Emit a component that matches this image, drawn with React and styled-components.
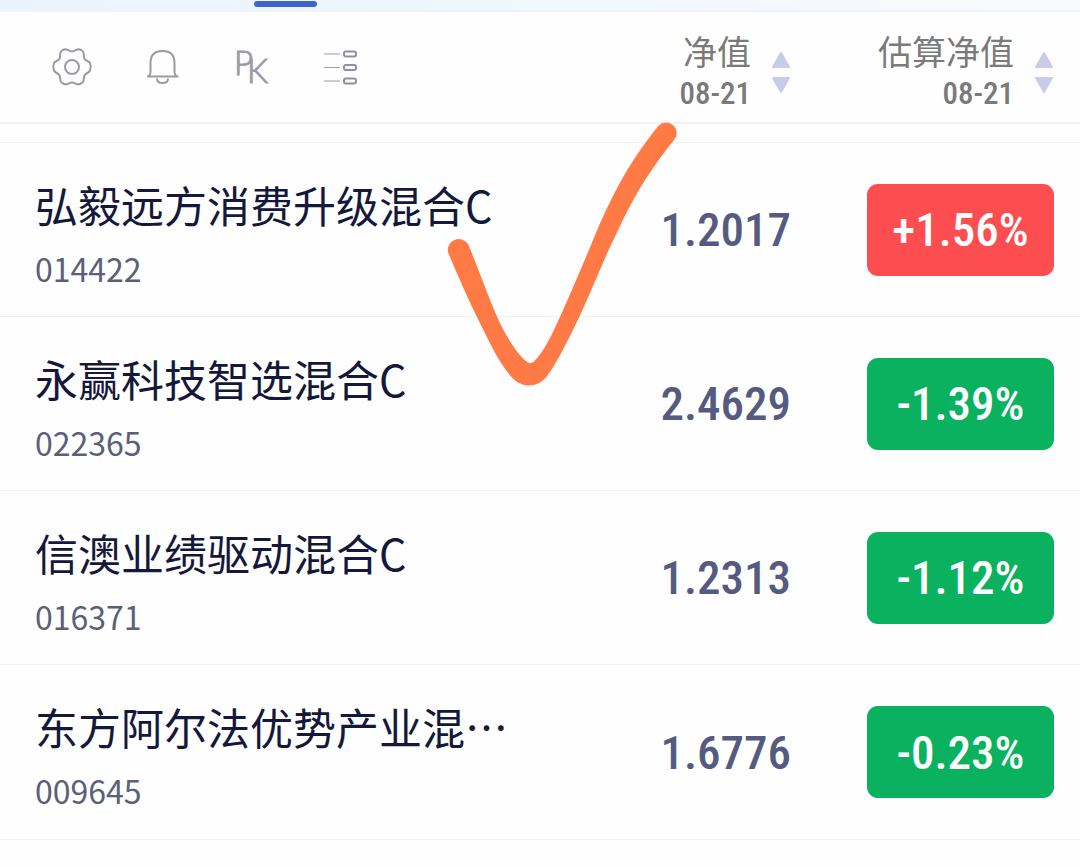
import React from 'react'
import styled, { createGlobalStyle } from 'styled-components'

const GlobalStyle = createGlobalStyle`
  * {
    box-sizing: border-box;
  }

  body {
    margin: 0;
    background: #fefefe;
    font-family: 'Noto Sans CJK SC', 'Noto Sans', sans-serif;
    color: #14183a;
  }
`

const numeric = `'Roboto Condensed', 'Liberation Sans Narrow', Roboto, sans-serif`

const Page = styled.main`
  position: relative;
  min-height: 100vh;
  overflow: hidden;
`

const TabStrip = styled.div`
  height: 12px;
  padding: 1px 0 0 254px;
  background: linear-gradient(90deg, #eaf3fb, #f6fbff);
  border-bottom: 2px solid #f0f4f8;
`

const TabIndicator = styled.div`
  width: 63px;
  height: 6px;
  border-radius: 3px;
  background: #4263c7;
`

const Table = styled.table`
  width: 100%;
  border-collapse: separate;
  border-spacing: 0;
  table-layout: fixed;

  tbody::before {
    content: '';
    display: table-row;
    height: 18px;
  }
`

const HeadCell = styled.th`
  width: ${({ width }) => width || 'auto'};
  height: 112px;
  padding: 0 ${({ end }) => end || '0'} 0 0;
  border-bottom: 2px solid #f2f2f4;
  font-weight: 400;
  text-align: right;
`

const Toolbar = styled.div`
  display: flex;
  align-items: center;
  gap: 50px;
  padding-left: 52px;
`

const IconButton = styled.button`
  display: flex;
  width: 40px;
  height: 40px;
  padding: 0;
  border: none;
  background: transparent;
  cursor: pointer;

  svg {
    width: 40px;
    height: 40px;
    overflow: visible;
    fill: none;
    stroke: #9a9ba8;
    stroke-width: 2;
  }

  text {
    fill: #9a9ba8;
    stroke-width: 1;
    font-family: Lato, sans-serif;
    font-weight: 300;
    font-size: 33px;
  }
`

const SortButton = styled.button`
  display: inline-flex;
  align-items: center;
  gap: 20px;
  padding: 10px 0 0;
  border: none;
  background: transparent;
  color: #7a7a7a;
  cursor: pointer;

  svg {
    width: 20px;
    height: 44px;
    fill: #c8cbea;
    stroke: #c8cbea;
    stroke-width: 2;
    stroke-linejoin: round;
  }
`

const SortLabel = styled.span`
  display: flex;
  flex-direction: column;
  align-items: flex-end;
  font-family: 'Noto Sans CJK SC', sans-serif;
  font-size: 34px;
  line-height: 44px;
  white-space: nowrap;
`

const SortDate = styled.span`
  font-family: ${numeric};
  font-weight: 500;
  font-size: 31px;
  line-height: 42px;
`

const Cell = styled.td`
  height: 174px;
  padding: 0 ${({ end }) => end || '0'} 0 0;
  border-top: 1px solid #f2f2f4;
  text-align: right;

  tr:last-child & {
    height: 176px;
    border-bottom: 1px solid #f2f2f4;
  }
`

const NameCell = styled(Cell)`
  padding-top: 12px;
  padding-left: 35px;
  text-align: left;
`

const FundName = styled.div`
  font-size: 43px;
  line-height: 64px;
  white-space: nowrap;
`

const FundCode = styled.div`
  color: #5b6079;
  font-size: 32px;
  line-height: 64px;
`

const Value = styled.span`
  color: #555b80;
  font-family: ${numeric};
  font-weight: 500;
  font-size: 47px;
`

const Change = styled.span`
  display: inline-flex;
  align-items: center;
  justify-content: center;
  width: 187px;
  height: 92px;
  border-radius: 11px;
  background: ${({ $up }) => ($up ? '#fc4e50' : '#0ab25f')};
  color: #ffffff;
  font-family: ${numeric};
  font-weight: 500;
  font-size: 47px;
  vertical-align: middle;
`

const CheckMark = styled.svg`
  position: absolute;
  top: 110px;
  left: 430px;
  width: 270px;
  height: 290px;
  fill: #ff7a45;
  pointer-events: none;
`

const funds = [
  { name: '弘毅远方消费升级混合C', code: '014422', value: '1.2017', change: '+1.56%' },
  { name: '永赢科技智选混合C', code: '022365', value: '2.4629', change: '-1.39%' },
  { name: '信澳业绩驱动混合C', code: '016371', value: '1.2313', change: '-1.12%' },
  { name: '东方阿尔法优势产业混…', code: '009645', value: '1.6776', change: '-0.23%' },
]

const GearIcon = () => (
  <svg viewBox="0 0 40 40">
    <path d="M12 2.500C15 1 16.500 4.500 20 4.500S25 1 28 2.500L30 3.500C33 5.500 31 8.500 32.500 11.500S36.500 13.500 38 16Q39.500 20 38 23.500C36.500 26.500 34 25.500 32.500 28.500S33 34 30 36L28 37C25 38.500 23.500 35.500 20 35.500S15 38.500 12 37L10 36C7 34 9 31.500 7.500 28.500S3.500 26.500 2 23.500Q0.500 20 2 16C3.500 13.500 6 14.500 7.500 11.500S7 5.500 10 3.500Z" />
    <circle cx="20" cy="20" r="7" />
  </svg>
)

const BellIcon = () => (
  <svg viewBox="0 0 40 40">
    <path d="M5 29.500H36.500M6.500 29Q8.500 28 8.500 25V16Q8.500 4 20.500 4T32.500 16V25Q32.500 28 34.500 29M15 31.500Q15 36 20.500 36T26 31.500" />
  </svg>
)

const PkIcon = () => (
  <svg viewBox="0 0 40 40">
    <text x="2" y="28">
      P
      <tspan x="15" y="36">K</tspan>
    </text>
  </svg>
)

const ListIcon = () => (
  <svg viewBox="0 0 40 40">
    {[7, 20.5, 34].map(y => (
      <g key={y}>
        <path d={`M2 ${y}H18`} strokeWidth="1" />
        <rect x="22" y={y - 2.5} width="12" height="5" rx="2" stroke="#8e8fa6" />
      </g>
    ))}
  </svg>
)

const SortHeader = ({ label, date }) => (
  <SortButton type="button">
    <SortLabel>
      {label}
      <SortDate>{date}</SortDate>
    </SortLabel>
    <svg viewBox="0 0 20 44">
      <path d="M10 3L18 17H2ZM10 42L18 28H2Z" />
    </svg>
  </SortButton>
)

const App = () => (
  <Page>
    <GlobalStyle />
    <TabStrip>
      <TabIndicator />
    </TabStrip>
    <Table lang="zh-CN">
      <thead>
        <tr>
          <HeadCell scope="col">
            <Toolbar>
              <IconButton type="button" aria-label="设置">
                <GearIcon />
              </IconButton>
              <IconButton type="button" aria-label="提醒">
                <BellIcon />
              </IconButton>
              <IconButton type="button" aria-label="PK">
                <PkIcon />
              </IconButton>
              <IconButton type="button" aria-label="列表">
                <ListIcon />
              </IconButton>
            </Toolbar>
          </HeadCell>
          <HeadCell scope="col" width="200px">
            <SortHeader label="净值" date="08-21" />
          </HeadCell>
          <HeadCell scope="col" width="289px" end="26px">
            <SortHeader label="估算净值" date="08-21" />
          </HeadCell>
        </tr>
      </thead>
      <tbody>
        {funds.map(({ name, code, value, change }) => (
          <tr key={code}>
            <NameCell>
              <FundName>{name}</FundName>
              <FundCode>{code}</FundCode>
            </NameCell>
            <Cell>
              <Value>{value}</Value>
            </Cell>
            <Cell end="26px">
              <Change $up={change.startsWith('+')}>{change}</Change>
            </Cell>
          </tr>
        ))}
      </tbody>
    </Table>
    <CheckMark viewBox="0 0 810 870" aria-hidden="true">
      <path d="M54 427A33 33 0 0 1 119 414C145 475 180 575 210 640C240 700 280 757 302 760C317 758 347 712 367 670C408 585 440 505 478 418C535 275 590 165 685 48A30 30 0 0 1 732 90C655 185 605 270 560 370C520 450 490 530 455 605C420 680 385 750 355 793C325 838 275 835 245 802C205 755 180 700 150 640C115 570 85 500 54 427Z" />
    </CheckMark>
  </Page>
)

export default App
